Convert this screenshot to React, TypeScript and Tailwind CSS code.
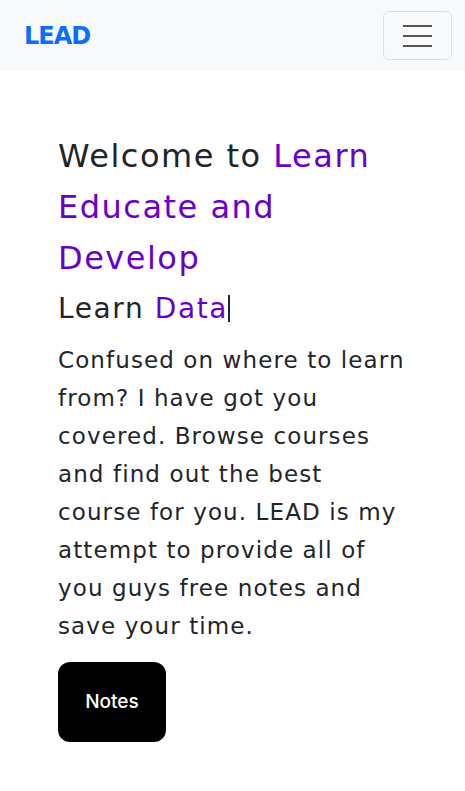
import { useState } from 'react';

const font = '"DejaVu Sans", "Noto Sans", sans-serif';

const Navbar = () => {
  const [open, setOpen] = useState(false);
  return (
    <nav className="bg-[#f8f9fa] h-[71px] flex items-center justify-between pl-6 pr-[13px]">
      <a href="#" className="text-[#0d6efd] text-[24px] font-bold tracking-[-1px] leading-none">LEAD</a>
      <button
        onClick={() => setOpen(!open)}
        className="w-[69px] h-[49px] rounded-[6px] border border-black/10 flex flex-col items-center justify-center gap-[8px]"
        aria-label="Toggle navigation"
      >
        <span className="block w-[29px] h-[2px] bg-[#555]" />
        <span className="block w-[29px] h-[2px] bg-[#555]" />
        <span className="block w-[29px] h-[2px] bg-[#555]" />
      </button>
    </nav>
  );
};

const App = () => {
  return (
    <div className="min-h-screen bg-white text-[#212529]" style={{ fontFamily: font }}>
      <Navbar />
      <main className="px-[58px] pt-[60px]">
        <h1 className="text-[32px] leading-[51px] font-normal tracking-[1.5px]">
          Welcome to <span className="text-[#6a00c8]">Learn Educate and Develop</span>
        </h1>
        <h3 className="text-[28px] leading-[50px] font-normal tracking-[1.6px]">
          Learn <span className="text-[#6a00c8]">Data</span>
          <span className="inline-block w-[2px] h-[27px] bg-[#212529] align-[-4px]" />
        </h3>
        <p className="text-[23px] leading-[38px] mt-[7px] tracking-[1.1px]">
          Confused on where to learn from? I have got you covered. Browse courses and find out the best course for you. LEAD is my attempt to provide all of you guys free notes and save your time.
        </p>
        <button className="block mt-[17px] w-[108px] h-[80px] rounded-[12px] bg-black text-white text-[19px] font-medium font-[Inter,sans-serif]">
          Notes
        </button>
      </main>
    </div>
  );
};

export default App;
